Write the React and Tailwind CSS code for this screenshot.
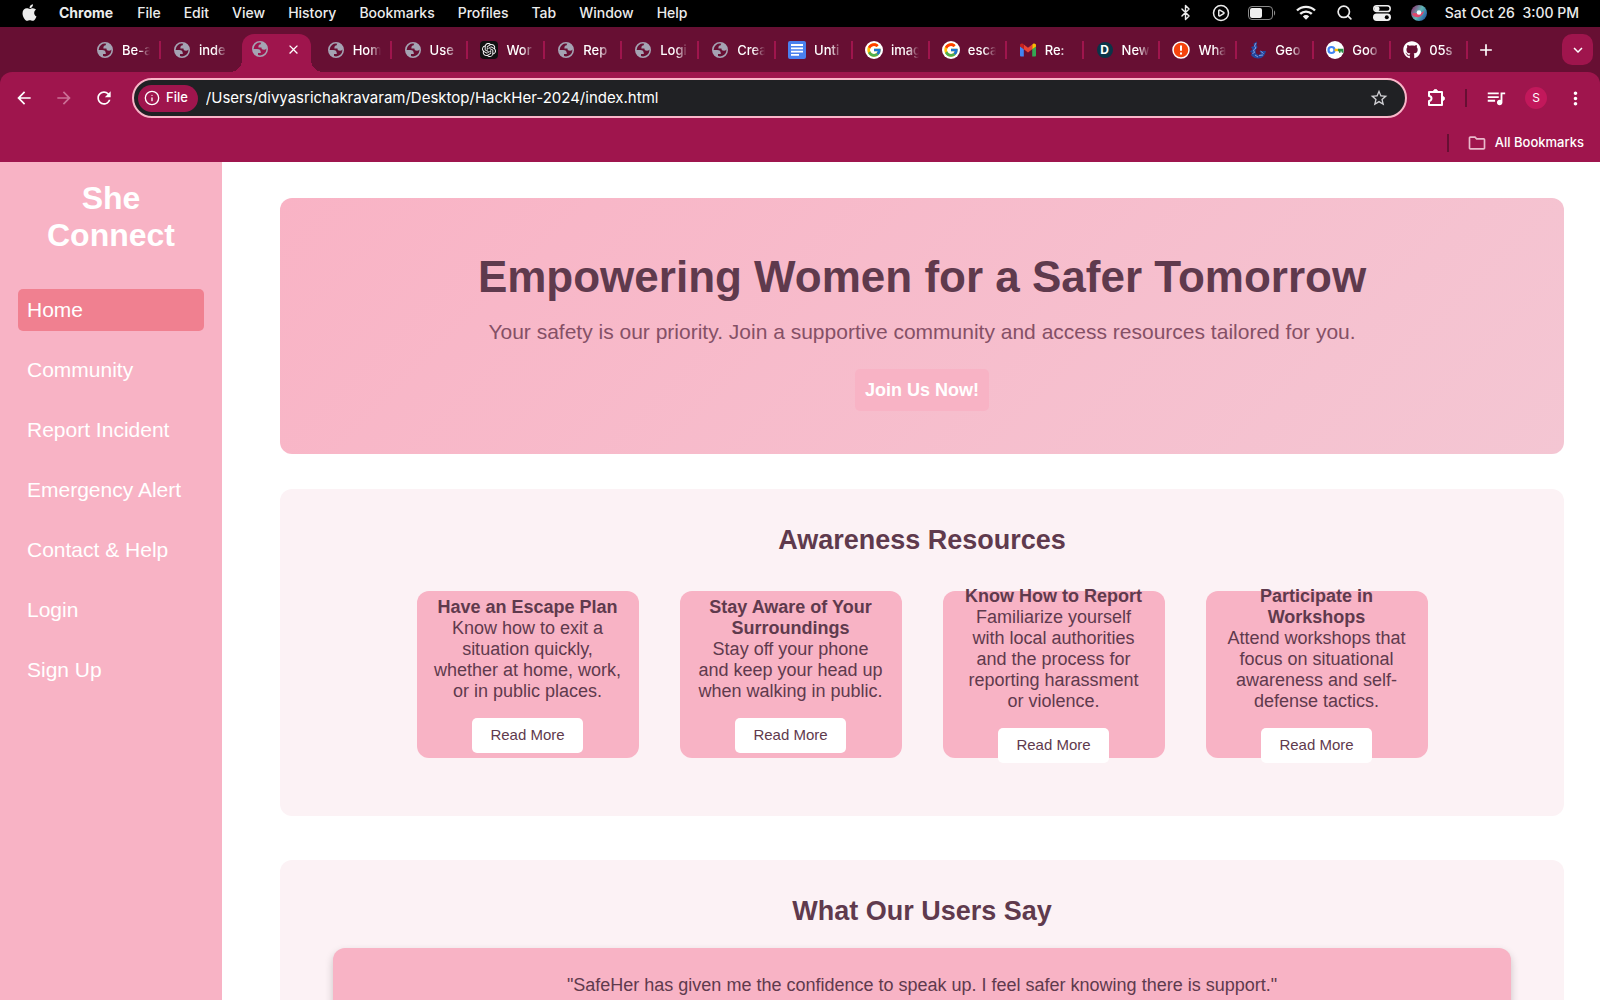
import { useState } from "react";
import { FaApple, FaGithub } from "react-icons/fa";
import { FcGoogle } from "react-icons/fc";
import {
  MdAdd,
  MdArrowBack,
  MdArrowForward,
  MdClose,
  MdExpandMore,
  MdMoreVert,
  MdOutlineFolder,
  MdQueueMusic,
  MdRefresh,
  MdStarOutline,
} from "react-icons/md";
import { SiOpenai } from "react-icons/si";
import { Bluetooth, CirclePlay, Info, Search } from "lucide-react";

const menus = ["File", "Edit", "View", "History", "Bookmarks", "Profiles", "Tab", "Window", "Help"];

const tabs = [
  { icon: "globe", title: "Be-a" },
  { icon: "globe", title: "inde" },
  { icon: "globe", title: "", active: true },
  { icon: "globe", title: "Hom" },
  { icon: "globe", title: "Use" },
  { icon: "openai", title: "Wor" },
  { icon: "globe", title: "Rep" },
  { icon: "globe", title: "Logi" },
  { icon: "globe", title: "Crea" },
  { icon: "docs", title: "Unti" },
  { icon: "google", title: "imag" },
  { icon: "google", title: "esca" },
  { icon: "gmail", title: "Re:" },
  { icon: "d", title: "New" },
  { icon: "alert", title: "Wha" },
  { icon: "geo", title: "Geo" },
  { icon: "key", title: "Goo" },
  { icon: "github", title: "05s" },
];

const navItems = ["Home", "Community", "Report Incident", "Emergency Alert", "Contact & Help", "Login", "Sign Up"];

const resources = [
  {
    title: "Have an Escape Plan",
    text: "Know how to exit a situation quickly, whether at home, work, or in public places.",
  },
  {
    title: "Stay Aware of Your Surroundings",
    text: "Stay off your phone and keep your head up when walking in public.",
  },
  {
    title: "Know How to Report",
    text: "Familiarize yourself with local authorities and the process for reporting harassment or violence.",
  },
  {
    title: "Participate in Workshops",
    text: "Attend workshops that focus on situational awareness and self-defense tactics.",
  },
];

function Favicon({ name }) {
  switch (name) {
    case "openai":
      return (
        <span className="flex size-[18px] items-center justify-center rounded-sm bg-[#111111] text-white">
          <SiOpenai size={14} />
        </span>
      );
    case "docs":
      return (
        <svg viewBox="0 0 18 18" className="size-[18px]">
          <rect width="18" height="18" rx="2" fill="#4a80ee" />
          <path d="M3 4h12M3 7.300h12M3 10.600h12M3 13.900h8" stroke="#fff" strokeWidth="1.800" />
        </svg>
      );
    case "google":
      return (
        <span className="flex size-[18px] items-center justify-center rounded-full bg-white">
          <FcGoogle size={16} />
        </span>
      );
    case "gmail":
      return (
        <svg viewBox="0 0 18 14" className="h-[14px] w-[18px]">
          <path d="M1 3v9.500a1 1 0 0 0 1 1h2.800V6z" fill="#4285f4" />
          <path d="M17 3v9.500a1 1 0 0 1-1 1h-2.800V6z" fill="#34a853" />
          <path d="M13.200 1.800V6.300L17 3.500V2.200C17 .7 15.300-.1 14.100.8z" fill="#fbbc04" />
          <path d="M4.800 6.300V1.500L9 4.700l4.200-3.200v4.800L9 9.500z" fill="#ea4335" />
          <path d="M1 2.200v1.300l3.800 2.800V1.500L3.900.8C2.700-.1 1 .7 1 2.200z" fill="#c5221f" />
        </svg>
      );
    case "d":
      return (
        <span className="flex size-4 items-center justify-center rounded-full bg-[#0b3448] text-xs font-bold text-white">
          D
        </span>
      );
    case "alert":
      return (
        <svg viewBox="0 0 18 18" className="size-[18px]">
          <circle cx="9" cy="9" r="8" fill="#f4430c" stroke="#fff" strokeWidth="1.500" />
          <path d="M9 4.500v5.300M9 11.500v2" stroke="#fff" strokeWidth="2" />
        </svg>
      );
    case "geo":
      return (
        <svg viewBox="0 0 18 18" className="size-[18px]">
          <path
            d="M8 .5 4.500 2.500 5 5 2 6 3.500 8.500 1 10.500l2 1.500-1 2c1.500 2.500 4.500 3.500 7.500 3.500 4 0 6.500-3 7.500-7.500h-6.500l1.500 2.500-2.500 1.500-2.500-1.500-.5-3L8.500 6 7.500 4z"
            fill="#24489f"
          />
          <path d="M7 2 5.500 5l1.500 2-2.500 2 1 2.500-2 1M6 14l3 2M11.500 10l3 2.500M10 14.500l4-.5" stroke="#8fa6e4" strokeWidth="0.900" fill="none" />
        </svg>
      );
    case "key":
      return (
        <svg viewBox="0 0 18 18" className="size-[18px]">
          <circle cx="9" cy="9" r="9" fill="#fff" />
          <circle cx="5.500" cy="9" r="3" fill="none" stroke="#4285f4" strokeWidth="2.200" />
          <path d="M8.500 7.800H13v2.400H8.500z" fill="#fbbc04" />
          <path d="M12 7.800h5.500v4h-1.800v-1.300h-1.200v1.300H13v-1.600h-1z" fill="#2c8a46" />
        </svg>
      );
    case "github":
      return <FaGithub size={18} className="text-white" />;
    default:
      return (
        <svg viewBox="2 2 20 20" className="size-4 text-[#a5a3b3]" fill="currentColor" fillRule="evenodd">
          <path d="M12 22a10 10 0 1 0 0-20 10 10 0 0 0 0 20zM4 12h4.400c3.407.022 4.922 1.730 4.543 5.127H9.488v2.470a8.004 8.004 0 0 0 10.498-8.083C19.327 12.504 18.332 13 17 13c-2.137 0-3.206-.916-3.206-2.750h-3.748c-.274-2.728.683-4.092 2.870-4.092 0-.975.327-1.597.811-1.970A8.004 8.004 0 0 0 4 12z" />
        </svg>
      );
  }
}

function MenuBar() {
  return (
    <div className="flex h-[27px] shrink-0 items-center justify-between bg-black pr-[21px] pb-0.5 pl-5 text-sm font-medium text-[#ececec]">
      <div className="flex items-center">
        <FaApple size={19} className="mr-5" />
        <button className="mr-6 font-bold">Chrome</button>
        <div className="flex gap-[23px]">
          {menus.map((m) => (
            <button key={m}>{m}</button>
          ))}
        </div>
      </div>
      <div className="flex items-center">
        <Bluetooth size={17} strokeWidth={2} className="mr-[18px]" />
        <CirclePlay size={18} strokeWidth={2} className="mr-[18px]" />
        <svg viewBox="0 0 28 14" className="mr-5 h-[14px] w-7">
          <rect x="0.500" y="0.500" width="24" height="13" rx="3.500" fill="none" stroke="#8a8a8a" />
          <rect x="2" y="2" width="12" height="10" rx="2" fill="#f0f0f0" />
          <path d="M26 4.500c1.500.5 1.500 4.500 0 5z" fill="#8a8a8a" />
        </svg>
        <svg viewBox="0 0 20 15" className="mr-5 h-[15px] w-5" fill="none" stroke="#f0f0f0" strokeWidth="2.400">
          <path d="M1 5.500a13 13 0 0 1 18 0M4.200 8.900a8.400 8.400 0 0 1 11.600 0" />
          <path d="M10 14.800 6.800 11.400a4.600 4.600 0 0 1 6.400 0z" fill="#f0f0f0" stroke="none" />
        </svg>
        <Search size={17} strokeWidth={2.4} className="mr-5" />
        <svg viewBox="0 0 18 16" className="mr-5 h-4 w-[18px]">
          <rect x="0.800" y="0.800" width="16.400" height="5.800" rx="2.900" fill="none" stroke="#f0f0f0" strokeWidth="1.500" />
          <circle cx="4" cy="3.700" r="2.500" fill="#f0f0f0" />
          <rect x="0" y="8.500" width="18" height="7.500" rx="3.700" fill="#f0f0f0" />
          <circle cx="13.800" cy="12.200" r="2" fill="#000" />
        </svg>
        <svg viewBox="0 0 16 16" className="mr-[18px] size-4">
          <defs>
            <linearGradient id="siri" x1="0" y1="0.200" x2="1" y2="0.800">
              <stop offset="0" stopColor="#8f2f6f" />
              <stop offset="0.500" stopColor="#5fb7b5" />
              <stop offset="1" stopColor="#1f4fa0" />
            </linearGradient>
          </defs>
          <circle cx="8" cy="8" r="8" fill="url(#siri)" />
          <path d="M1 9c3-3 5 2 12-3-1 6-8 9-12 3z" fill="#e0456b" />
          <circle cx="8" cy="7.500" r="2.300" fill="#eefcff" />
        </svg>
        <span className="whitespace-pre">Sat Oct 26  3:00 PM</span>
      </div>
    </div>
  );
}

function Tab({ tab, divider }) {
  if (tab.active) {
    return (
      <div className="relative mx-1 flex h-[38px] flex-1 items-center justify-between self-end rounded-t-xl bg-[#9f154d] px-[10px] pb-2 text-white">
        <span className="absolute bottom-0 -left-3 size-3 bg-[radial-gradient(circle_at_0_0,transparent_12px,#9f154d_12px)]" />
        <span className="absolute -right-3 bottom-0 size-3 bg-[radial-gradient(circle_at_100%_0,transparent_12px,#9f154d_12px)]" />
        <Favicon name={tab.icon} />
        <button aria-label="Close tab">
          <MdClose size={15} />
        </button>
      </div>
    );
  }
  return (
    <div className={`flex h-[18px] flex-1 items-center border-r-2 pl-3 ${divider ? "border-[#9f154d]" : "border-transparent"}`}>
      <span className="flex w-[18px] shrink-0 justify-center">
        <Favicon name={tab.icon} />
      </span>
      <button className="ml-2 w-[30px] text-left text-[13px] leading-[18px] font-medium whitespace-nowrap text-white [mask-image:linear-gradient(to_right,#000_16px,transparent_28px)]">
        {tab.title}
      </button>
    </div>
  );
}

function BrowserChrome() {
  const [url, setUrl] = useState("/Users/divyasrichakravaram/Desktop/HackHer-2024/index.html");

  return (
    <div className="shrink-0 bg-[#670f33] text-white">
      <div className="flex h-[45px] pl-[84px]">
        {tabs.map((tab, i) => (
          <div key={i} className="flex min-w-0 flex-1 items-center">
            {/* no divider right before the active tab */}
            <Tab tab={tab} divider={!tabs[i + 1]?.active} />
          </div>
        ))}
        <div className="flex w-[132px] shrink-0 items-center justify-between pr-[7px] pl-2">
          <button aria-label="New tab">
            <MdAdd size={20} />
          </button>
          <button aria-label="Search tabs" className="flex size-[31px] items-center justify-center rounded-[10px] bg-[#9f154d]">
            <MdExpandMore size={18} />
          </button>
        </div>
      </div>
      <div className="rounded-t-xl bg-[#9f154d]">
        <div className="flex h-[52px] items-center px-[14px]">
          <button aria-label="Back" className="mr-5">
            <MdArrowBack size={20} />
          </button>
          <button aria-label="Forward" className="mr-5 text-[#cc7096]">
            <MdArrowForward size={20} />
          </button>
          <button aria-label="Reload" className="mr-[18px]">
            <MdRefresh size={20} />
          </button>
          <div className="mr-5 flex h-10 flex-1 items-center rounded-full border-2 border-[#f9b5c8] bg-[#202124] pr-4 pl-1">
            <span className="mr-2 flex h-[27px] items-center gap-1.5 rounded-full bg-[#9f154d] pr-[10px] pl-1.5 text-[13px] font-medium">
              <Info size={16} />
              File
            </span>
            <input
              aria-label="Address"
              className="min-w-0 flex-1 bg-transparent text-[15px] outline-none"
              value={url}
              onChange={(e) => setUrl(e.target.value)}
            />
            <button aria-label="Bookmark this page" className="text-[#d0d0d4]">
              <MdStarOutline size={20} />
            </button>
          </div>
          <button aria-label="Extensions">
            <svg viewBox="0 0 20 20" className="size-5" fill="none" stroke="currentColor" strokeWidth="2" strokeLinejoin="round">
              <path d="M2 4h13v13H2v-4a2.500 2.500 0 0 0 0-5z" />
              <path d="M6.500 3.500a2 2 0 0 1 4 0zM15.500 8.500a2 2 0 0 1 0 4z" fill="currentColor" strokeWidth="1" />
            </svg>
          </button>
          <span className="mx-[18px] h-[18px] w-0.5 bg-[#670f33]" />
          <button aria-label="Media" className="mr-[18px]">
            <MdQueueMusic size={22} />
          </button>
          <button className="mr-[18px] flex size-[22px] items-center justify-center rounded-full bg-[#c2185b] text-xs">S</button>
          <button aria-label="Menu">
            <MdMoreVert size={21} />
          </button>
        </div>
        <div className="flex h-[38px] items-center justify-end pr-4 text-[13px] font-medium">
          <span className="mr-[18px] h-[18px] w-0.5 bg-[#670f33]" />
          <button className="flex items-center gap-2">
            <MdOutlineFolder size={20} className="text-[#e9b9cb]" />
            All Bookmarks
          </button>
        </div>
      </div>
    </div>
  );
}

function Sidebar() {
  return (
    <aside className="w-[222px] shrink-0 bg-[#f8b3c5] px-[18px] pt-[18px] text-white">
      <h2 className="mb-[35px] text-center text-[32px] leading-[37px] font-bold">
        She
        <br />
        Connect
      </h2>
      <nav className="flex flex-col gap-[18px]">
        {navItems.map((item) => (
          <a
            key={item}
            href="#"
            className={`rounded-[5px] px-[9px] py-[9px] text-[21px] leading-6 ${item === "Home" ? "bg-[#f08090]" : ""}`}
          >
            {item}
          </a>
        ))}
      </nav>
    </aside>
  );
}

function ResourceCard({ resource }) {
  return (
    <div className="flex h-[167px] w-[222px] flex-col items-center justify-center rounded-xl bg-[#f8b3c5] px-4">
      <p className="shrink-0 text-lg leading-[21px]">
        <strong>{resource.title}</strong>
        <br />
        {resource.text}
      </p>
      <button className="mt-4 h-[35px] shrink-0 rounded-[5px] bg-white px-[18px] text-[15px]">Read More</button>
    </div>
  );
}

export default function App() {
  return (
    <div className="flex h-screen flex-col bg-white font-['Inter',sans-serif]">
      <MenuBar />
      <BrowserChrome />
      <div className="flex min-h-0 flex-1 font-['Liberation_Sans',Arial,sans-serif]">
        <Sidebar />
        <main className="flex-1 overflow-y-auto pt-9 pr-9 pl-[58px] text-center text-[#5f3a4d] [scrollbar-width:none]">
          <section className="mb-[35px] rounded-xl bg-linear-135 from-[#f9b3c5] to-[#f4c6d3] px-9 pt-[53px] pb-[43px]">
            <h1 className="mb-[17px] text-[44px] leading-[52px] font-bold">Empowering Women for a Safer Tomorrow</h1>
            <p className="mb-[25px] text-[21px] leading-6 text-[#855066]">
              Your safety is our priority. Join a supportive community and access resources tailored for you.
            </p>
            <button className="h-[42px] rounded-[5px] bg-[#f8b3c5] px-[10px] text-lg font-bold text-white">Join Us Now!</button>
          </section>

          <section className="mb-11 rounded-xl bg-[#fcf2f5] px-9 pt-9 pb-[58px]">
            <h2 className="mb-9 text-[27px] leading-[30px] font-bold">Awareness Resources</h2>
            <div className="flex justify-center gap-[41px]">
              {resources.map((r) => (
                <ResourceCard key={r.title} resource={r} />
              ))}
            </div>
          </section>

          <section className="rounded-xl bg-[#fcf2f5] px-[53px] pt-9 pb-9">
            <h2 className="mb-[22px] text-[27px] leading-[30px] font-bold">What Our Users Say</h2>
            <div className="rounded-xl bg-[#f8b3c5] px-9 py-[27px] shadow-[0_4px_8px_rgba(0,0,0,0.2)]">
              <p className="text-lg leading-[21px]">
                "SafeHer has given me the confidence to speak up. I feel safer knowing there is support."
              </p>
            </div>
          </section>
        </main>
      </div>
    </div>
  );
}
